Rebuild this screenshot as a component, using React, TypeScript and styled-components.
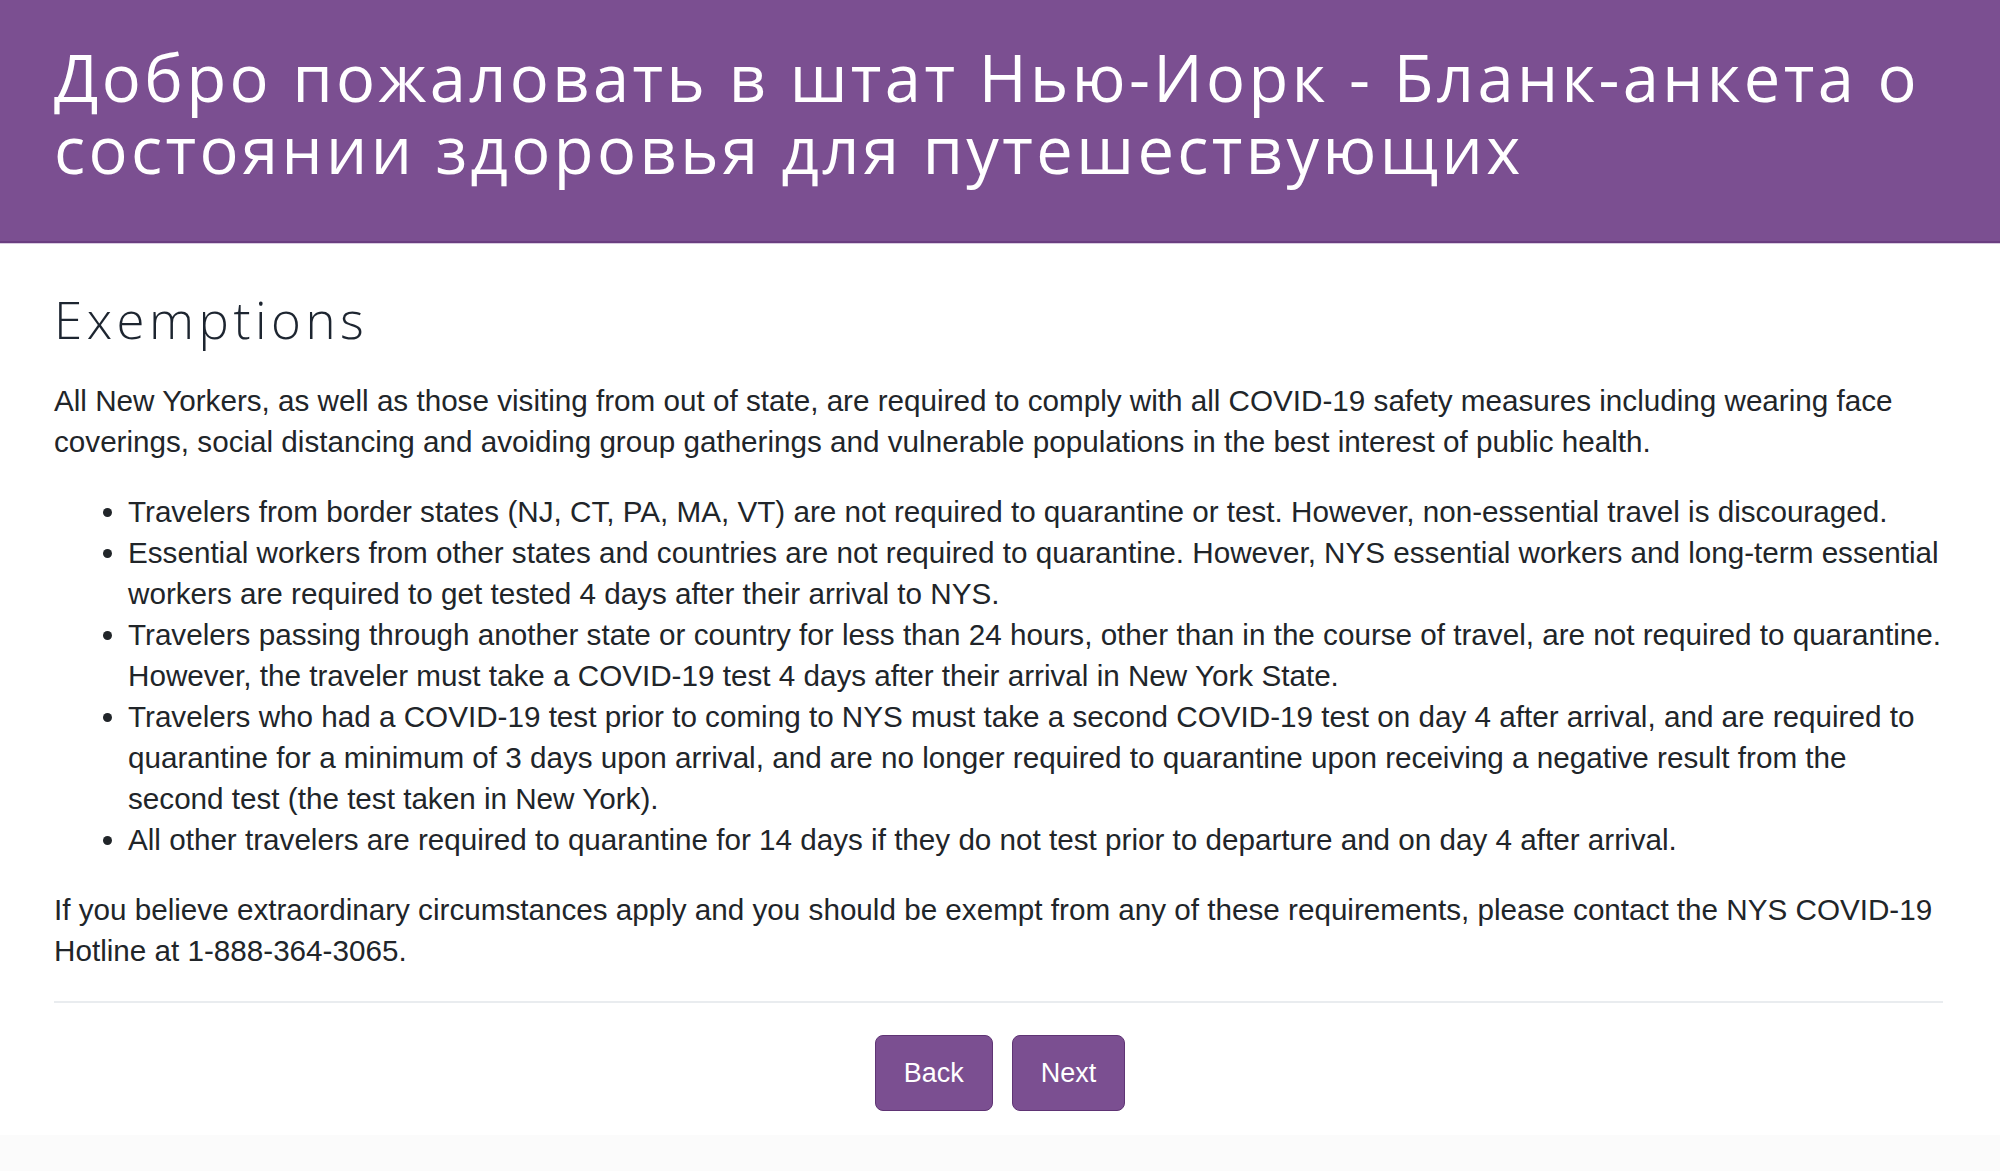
import React from 'react'
import styled, { createGlobalStyle } from 'styled-components'

const PURPLE = '#7b4f91'

const GlobalStyle = createGlobalStyle`
  html, body {
    margin: 0;
    padding: 0;
    background: #fff;
  }
  body {
    font-family: 'Liberation Sans', Arial, sans-serif;
    color: #212529;
  }
`

const Page = styled.div`
  display: flex;
  flex-direction: column;
  min-height: 1176px;
`

const Header = styled.header`
  background: ${PURPLE};
  padding: 41px 54px 56px;
  border-bottom: 2px solid #6a3e80;
  box-shadow: 0 1px 0 #d9cbe1;
`

const Title = styled.h1`
  margin: 0;
  font-family: 'Open Sans', 'Noto Sans', sans-serif;
  font-weight: 400;
  font-size: 65px;
  line-height: 72px;
  letter-spacing: 3.4px;
  color: #fff;
`

const Main = styled.main`
  padding: 46px 54px 0 54px;
`

const SectionTitle = styled.h2`
  margin: 0 0 31px;
  font-family: 'Open Sans', 'Noto Sans', sans-serif;
  font-weight: 300;
  font-size: 51px;
  line-height: 60px;
  letter-spacing: 4.5px;
  color: #1d2530;
`

const Text = styled.p`
  margin: 0 0 29px;
  font-size: 29.65px;
  line-height: 41px;
`

const List = styled.ul`
  margin: 0 0 29px;
  padding-left: 74px;
  font-size: 29.65px;
  line-height: 41px;
`

const Divider = styled.hr`
  margin: 30px 3px 32px 0;
  border: 0;
  border-top: 2px solid #e9ecef;
`

const Actions = styled.div`
  display: flex;
  justify-content: center;
  gap: 19px;
`

const Button = styled.button`
  height: 76px;
  padding: 0 28px;
  border: 1px solid #5f3474;
  border-radius: 8px;
  background: ${PURPLE};
  color: #fff;
  font-family: 'Liberation Sans', Arial, sans-serif;
  font-size: 27px;
  cursor: pointer;
`

const Footer = styled.footer`
  margin-top: 24px;
  height: 36px;
  background: #fbfbfb;
`

const items = [
  'Travelers from border states (NJ, CT, PA, MA, VT) are not required to quarantine or test. However, non-essential travel is discouraged.',
  'Essential workers from other states and countries are not required to quarantine. However, NYS essential workers and long-term essential workers are required to get tested 4 days after their arrival to NYS.',
  'Travelers passing through another state or country for less than 24 hours, other than in the course of travel, are not required to quarantine. However, the traveler must take a COVID-19 test 4 days after their arrival in New York State.',
  'Travelers who had a COVID-19 test prior to coming to NYS must take a second COVID-19 test on day 4 after arrival, and are required to quarantine for a minimum of 3 days upon arrival, and are no longer required to quarantine upon receiving a negative result from the second test (the test taken in New York).',
  'All other travelers are required to quarantine for 14 days if they do not test prior to departure and on day 4 after arrival.',
]

const App: React.FC = () => (
  <Page>
    <GlobalStyle />
    <Header>
      <Title>
        Добро пожаловать в штат Нью-Иорк - Бланк-анкета о состоянии здоровья для путешествующих
      </Title>
    </Header>
    <Main>
      <SectionTitle>Exemptions</SectionTitle>
      <Text>
        All New Yorkers, as well as those visiting from out of state, are required to comply with
        all COVID-19 safety measures including wearing face coverings, social distancing and
        avoiding group gatherings and vulnerable populations in the best interest of public health.
      </Text>
      <List>
        {items.map(item => (
          <li key={item}>{item}</li>
        ))}
      </List>
      <Text>
        If you believe extraordinary circumstances apply and you should be exempt from any of these
        requirements, please contact the NYS COVID-19 Hotline at 1-888-364-3065.
      </Text>
      <Divider />
      <Actions>
        <Button type="button">Back</Button>
        <Button type="button">Next</Button>
      </Actions>
    </Main>
    <Footer />
  </Page>
)

export default App
